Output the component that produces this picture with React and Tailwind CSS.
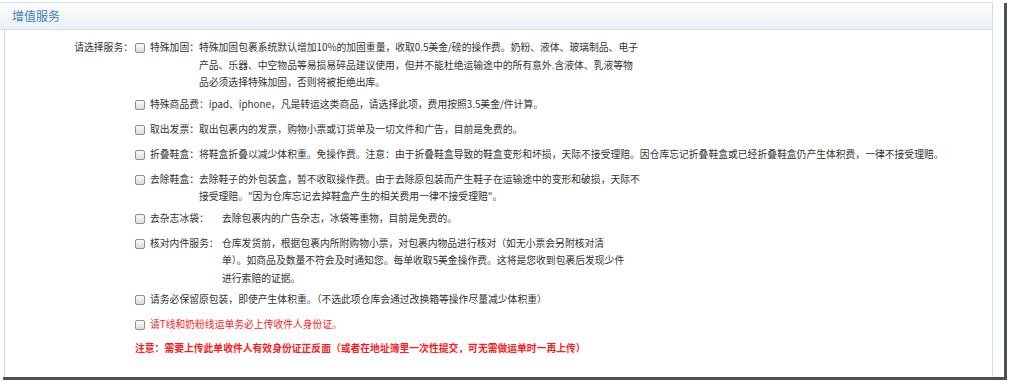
import React from "react";

function Box() {
  return (
    <span className="mt-[4px] block h-[10px] w-[10px] shrink-0 rounded-[2px] border border-[#8e8e8e] bg-gradient-to-b from-[#fafafa] to-[#dcdcdc]" />
  );
}

function Item({ title, titleW, children, red }) {
  return (
    <div className={`flex min-h-[25px] items-start py-[2px] ${red ? "text-[#ff1a1a]" : ""}`}>
      <Box />
      <div className="ml-[5px] flex items-start">
        {title && <span className={`shrink-0 whitespace-nowrap ${titleW || ""}`}>{title}</span>}
        <div className="whitespace-nowrap">{children}</div>
      </div>
    </div>
  );
}

export default function App() {
  return (
    <div
      className="h-[381px] w-[1009px] bg-white text-[9.8px] leading-[17.5px] text-[#333]"
      style={{ fontFamily: '"Noto Sans CJK SC", "Noto Sans", sans-serif' }}
    >
      <div className="flex h-[377px] w-[1004px] flex-col bg-white shadow-[3px_3px_0_#505050]">
        <div className="mt-[2px] flex w-[993px] flex-1 flex-col border-t border-r border-[#cfdce9]">
          <div className="h-[27px] shrink-0 border-b border-[#cfdce9] bg-gradient-to-b from-[#fdfdfc] to-[#e9f0f6] pl-[12px] text-[12px] leading-[26px] text-[#3d80c6]">
            增值服务
          </div>
          <div className="ml-[4px] flex flex-1 border-l border-[#cfdce9] pt-[7px]">
            <div className="w-[128px] shrink-0 pt-[2px] text-right">请选择服务：</div>
            <div className="ml-[2px] flex flex-col">
              <Item title="特殊加固：">
                特殊加固包裹系统默认增加10%的加固重量，收取0.5美金/磅的操作费。奶粉、液体、玻璃制品、电子
                <br />
                产品、乐器、中空物品等易损易碎品建议使用，但并不能杜绝运输途中的所有意外.含液体、乳液等物
                <br />
                品必须选择特殊加固，否则将被拒绝出库。
              </Item>
              <Item>特殊商品费：ipad、iphone，凡是转运这类商品，请选择此项，费用按照3.5美金/件计算。</Item>
              <Item>取出发票：取出包裹内的发票，购物小票或订货单及一切文件和广告，目前是免费的。</Item>
              <Item>
                折叠鞋盒：将鞋盒折叠以减少体积重。免操作费。注意：由于折叠鞋盒导致的鞋盒变形和坏损，天际不接受理赔。因仓库忘记折叠鞋盒或已经折叠鞋盒仍产生体积费，一律不接受理赔。
              </Item>
              <Item title="去除鞋盒：">
                去除鞋子的外包装盒，暂不收取操作费。由于去除原包装而产生鞋子在运输途中的变形和破损，天际不
                <br />
                接受理赔。"因为仓库忘记去掉鞋盒产生的相关费用一律不接受理赔"。
              </Item>
              <Item title="去杂志冰袋：" titleW="w-[72px]">
                去除包裹内的广告杂志，冰袋等重物，目前是免费的。
              </Item>
              <Item title="核对内件服务：" titleW="w-[72px]">
                仓库发货前，根据包裹内所附购物小票，对包裹内物品进行核对（如无小票会另附核对清
                <br />
                单）。如商品及数量不符会及时通知您。每单收取5美金操作费。这将是您收到包裹后发现少件
                <br />
                进行索赔的证据。
              </Item>
              <Item>请务必保留原包装，即使产生体积重。（不选此项仓库会通过改换箱等操作尽量减少体积重）</Item>
              <Item red>请T线和奶粉线运单务必上传收件人身份证。</Item>
              <div className="min-h-[25px] pt-[1px] font-bold text-[#ff1a1a]">
                注意：需要上传此单收件人有效身份证正反面（或者在地址簿里一次性提交，可无需做运单时一再上传）
              </div>
            </div>
          </div>
        </div>
      </div>
    </div>
  );
}
